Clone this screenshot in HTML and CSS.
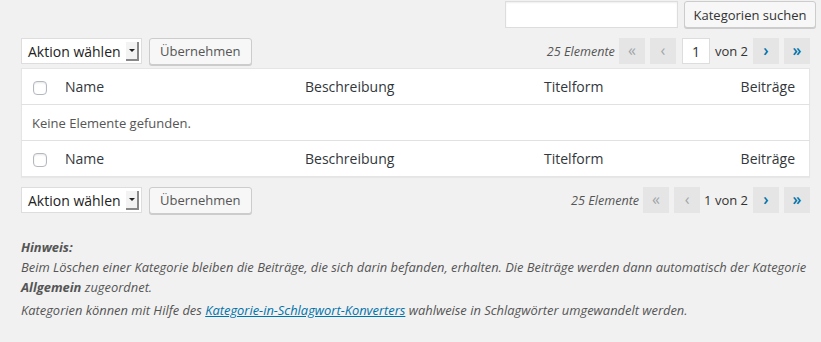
FILE: index.html
```html
<!DOCTYPE html>
<html lang="de">
<head>
  <meta charset="UTF-8">
  <title>Kategorien</title>
  <link rel="stylesheet" href="styles.css">
</head>
<body>
  <div class="wrap">

    <div class="search-box">
      <input type="search" class="search-input">
      <button class="button">Kategorien suchen</button>
    </div>

    <div class="tablenav top">
      <div class="bulk">
        <div class="select">Aktion wählen<span class="arrow"></span></div>
        <button class="button">Übernehmen</button>
      </div>
      <div class="pages">
        <span class="count">25 Elemente</span>
        <span class="pg off">&laquo;</span>
        <span class="pg off">&lsaquo;</span>
        <input class="current" type="text" value="1">
        <span class="of">von 2</span>
        <span class="pg on">&rsaquo;</span>
        <span class="pg on">&raquo;</span>
      </div>
    </div>

    <table class="list">
      <thead>
        <tr>
          <th class="check"><span class="box"></span></th>
          <th class="c-name">Name</th>
          <th class="c-desc">Beschreibung</th>
          <th class="c-slug">Titelform</th>
          <th class="c-posts">Beiträge</th>
        </tr>
      </thead>
      <tbody>
        <tr><td colspan="5" class="empty">Keine Elemente gefunden.</td></tr>
      </tbody>
      <tfoot>
        <tr>
          <th class="check"><span class="box"></span></th>
          <th class="c-name">Name</th>
          <th class="c-desc">Beschreibung</th>
          <th class="c-slug">Titelform</th>
          <th class="c-posts">Beiträge</th>
        </tr>
      </tfoot>
    </table>

    <div class="tablenav bottom">
      <div class="bulk">
        <div class="select">Aktion wählen<span class="arrow"></span></div>
        <button class="button">Übernehmen</button>
      </div>
      <div class="pages">
        <span class="count">25 Elemente</span>
        <span class="pg off">&laquo;</span>
        <span class="pg off">&lsaquo;</span>
        <span class="of">1 von 2</span>
        <span class="pg on">&rsaquo;</span>
        <span class="pg on">&raquo;</span>
      </div>
    </div>

    <div class="note">
      <p><strong>Hinweis:</strong><br>Beim Löschen einer Kategorie bleiben die Beiträge, die sich darin befanden, erhalten. Die Beiträge werden dann automatisch der Kategorie <strong>Allgemein</strong> zugeordnet.</p>
      <p>Kategorien können mit Hilfe des <a href="#">Kategorie-in-Schlagwort-Konverters</a> wahlweise in Schlagwörter umgewandelt werden.</p>
    </div>

  </div>
</body>
</html>
```

FILE: styles.css
```css
body {
  margin: 0;
  background: #f1f1f1;
  font-family: "Open Sans", sans-serif;
  font-size: 13px;
  color: #444;
}

.wrap {
  padding: 1px 11px 0 21px;
}

.search-box {
  display: flex;
  justify-content: flex-end;
  gap: 6px;
  margin-right: -6px;
}

.search-input {
  width: 173px;
  height: 27px;
  box-sizing: border-box;
  border: 1px solid #ddd;
  background: #fff;
  box-shadow: inset 0 1px 2px rgba(0,0,0,.07);
  margin: 0;
}

.button {
  font-family: "Open Sans", sans-serif;
  font-size: 13px;
  color: #555;
  background: #f7f7f7;
  border: 1px solid #ccc;
  border-radius: 3px;
  box-shadow: 0 1px 0 #ccc;
  height: 27px;
  padding: 0 10px;
  margin: 0;
}

.search-box .button {
  color: #333;
  width: 132px;
  padding: 0;
}

.tablenav {
  display: flex;
  justify-content: space-between;
  align-items: center;
  height: 26px;
}

.tablenav.top {
  margin: 10px 0 4px;
}

.tablenav.bottom {
  margin: 10px 0 0;
}

.bulk {
  display: flex;
  align-items: center;
  gap: 7px;
}

.select {
  display: flex;
  align-items: center;
  justify-content: space-between;
  width: 121px;
  height: 26px;
  box-sizing: border-box;
  background: #fff;
  border: 1px solid #ddd;
  padding: 0 2px 0 6px;
  font-size: 14px;
  color: #222;
}

.arrow {
  width: 11px;
  height: 17px;
  background: #f3f3f3;
  border-right: 2px solid #888;
  border-bottom: 2px solid #888;
  position: relative;
}

.arrow::after {
  content: "";
  position: absolute;
  left: 3px;
  top: 7px;
  border-left: 3px solid transparent;
  border-right: 3px solid transparent;
  border-top: 3px solid #222;
}

.pages {
  display: flex;
  align-items: center;
}

.count {
  font-style: italic;
  font-size: 12.6px;
  color: #555;
  margin-right: -1px;
}

.pg {
  display: inline-flex;
  align-items: center;
  justify-content: center;
  height: 26px;
  width: 26px;
  background: #e5e5e5;
  font-size: 16px;
  font-weight: 600;
  margin-left: 5px;
  box-sizing: border-box;
  padding-bottom: 2px;
}

.pg.off {
  color: #a0a5aa;
  font-weight: 400;
}

.pg.on {
  color: #0073aa;
}

.current {
  width: 28px;
  height: 26px;
  box-sizing: border-box;
  border: 1px solid #ddd;
  background: #fff;
  text-align: center;
  font-family: "Open Sans", sans-serif;
  font-size: 14px;
  color: #333;
  margin: 0 5px 0 6px;
  padding: 0;
}

.of {
  font-size: 13px;
  color: #333;
  margin-right: 0;
}

.bottom .of {
  margin-left: 4px;
}

.list {
  width: 100%;
  border-collapse: collapse;
  background: #fff;
  border: 1px solid #e5e5e5;
  box-shadow: 0 1px 1px rgba(0,0,0,.04);
}

.list th {
  font-weight: 400;
  font-size: 14px;
  color: #32373c;
  text-align: left;
  height: 35px;
  padding: 0 10px;
}

.list thead th {
  border-bottom: 1px solid #e1e1e1;
}

.list tfoot th {
  border-top: 1px solid #e1e1e1;
}

.list .check {
  width: 13px;
  padding: 0 0 0 11px;
}

.box {
  display: block;
  width: 14px;
  height: 14px;
  box-sizing: border-box;
  border: 1px solid #b4b9be;
  border-radius: 4px;
  background: #fff;
  box-shadow: inset 0 1px 2px rgba(0,0,0,.1);
  margin-top: 2px;
}

.list .c-name {
  width: 220px;
  padding-left: 18px;
}

.list .c-desc {
  width: 219px;
}

.list .c-posts {
  text-align: right;
  padding-right: 14px;
}

.empty {
  height: 35px;
  padding: 0 10px;
  color: #555;
}

.note {
  margin-top: 24px;
  color: #555;
  font-style: italic;
  font-size: 12.9px;
  line-height: 20px;
}

.note p {
  margin: 0 0 3px;
}

.note strong {
  font-weight: 700;
}

.note a {
  color: #0073aa;
}
```
